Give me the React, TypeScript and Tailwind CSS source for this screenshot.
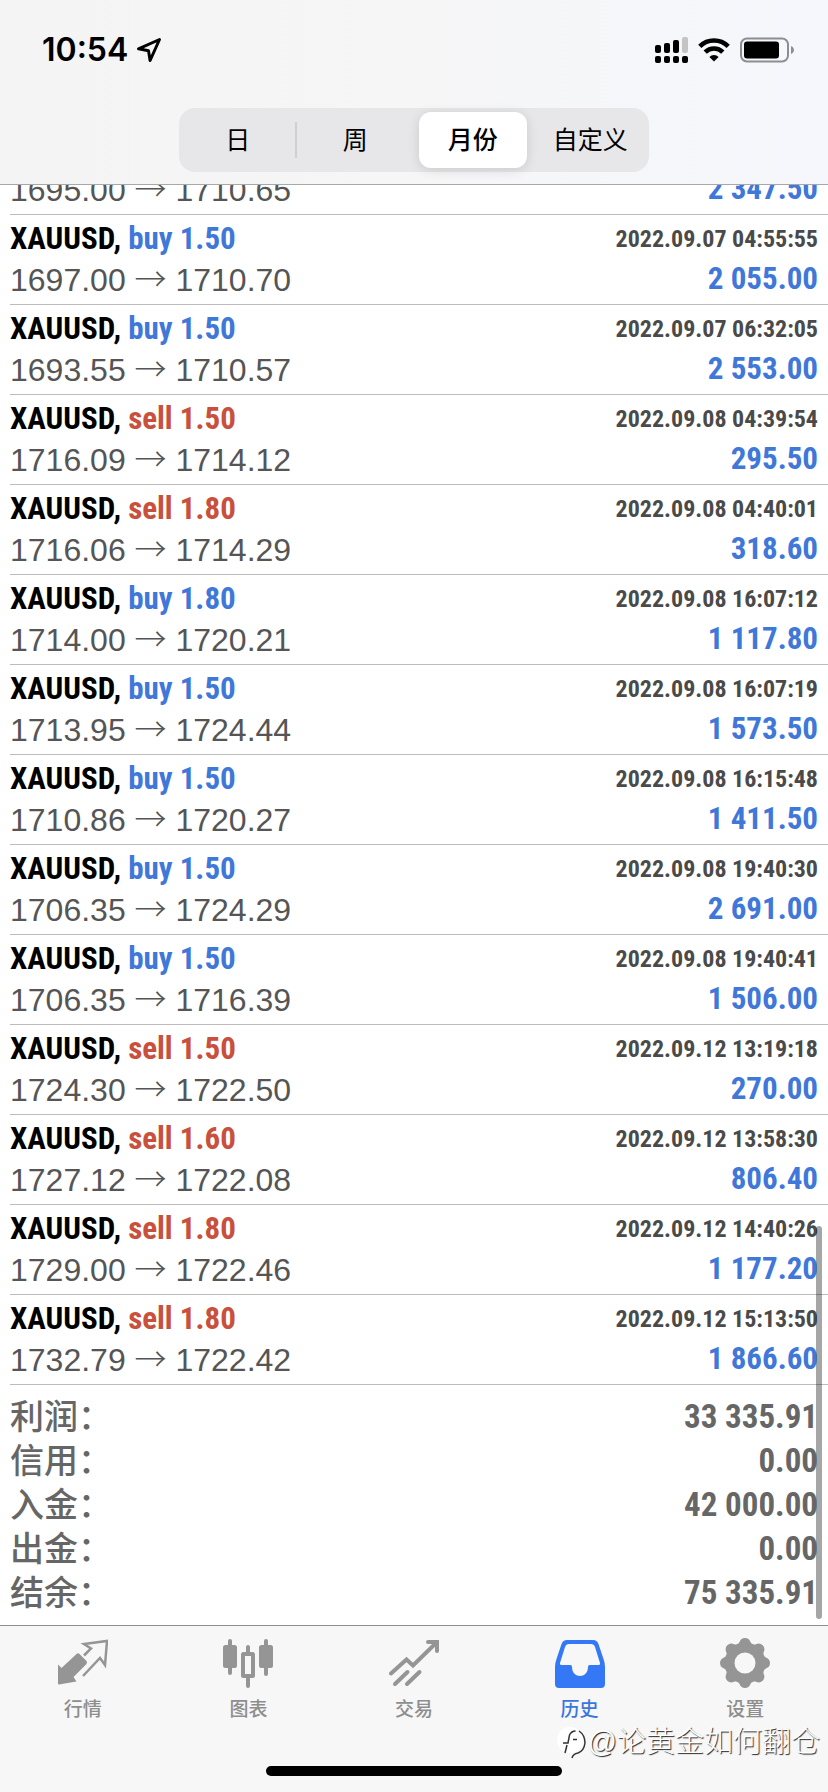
import React from "react";

type Deal = {
  order?: { side: "buy" | "sell"; volume: string; time: string };
  open: string;
  close: string;
  profit: string;
};

const deals: Deal[] = [
  { open: "1695.00", close: "1710.65", profit: "2 347.50" },
  { order: { side: "buy", volume: "1.50", time: "2022.09.07 04:55:55" }, open: "1697.00", close: "1710.70", profit: "2 055.00" },
  { order: { side: "buy", volume: "1.50", time: "2022.09.07 06:32:05" }, open: "1693.55", close: "1710.57", profit: "2 553.00" },
  { order: { side: "sell", volume: "1.50", time: "2022.09.08 04:39:54" }, open: "1716.09", close: "1714.12", profit: "295.50" },
  { order: { side: "sell", volume: "1.80", time: "2022.09.08 04:40:01" }, open: "1716.06", close: "1714.29", profit: "318.60" },
  { order: { side: "buy", volume: "1.80", time: "2022.09.08 16:07:12" }, open: "1714.00", close: "1720.21", profit: "1 117.80" },
  { order: { side: "buy", volume: "1.50", time: "2022.09.08 16:07:19" }, open: "1713.95", close: "1724.44", profit: "1 573.50" },
  { order: { side: "buy", volume: "1.50", time: "2022.09.08 16:15:48" }, open: "1710.86", close: "1720.27", profit: "1 411.50" },
  { order: { side: "buy", volume: "1.50", time: "2022.09.08 19:40:30" }, open: "1706.35", close: "1724.29", profit: "2 691.00" },
  { order: { side: "buy", volume: "1.50", time: "2022.09.08 19:40:41" }, open: "1706.35", close: "1716.39", profit: "1 506.00" },
  { order: { side: "sell", volume: "1.50", time: "2022.09.12 13:19:18" }, open: "1724.30", close: "1722.50", profit: "270.00" },
  { order: { side: "sell", volume: "1.60", time: "2022.09.12 13:58:30" }, open: "1727.12", close: "1722.08", profit: "806.40" },
  { order: { side: "sell", volume: "1.80", time: "2022.09.12 14:40:26" }, open: "1729.00", close: "1722.46", profit: "1 177.20" },
  { order: { side: "sell", volume: "1.80", time: "2022.09.12 15:13:50" }, open: "1732.79", close: "1722.42", profit: "1 866.60" },
];

const summary = [
  { label: "利润", value: "33 335.91" },
  { label: "信用", value: "0.00" },
  { label: "入金", value: "42 000.00" },
  { label: "出金", value: "0.00" },
  { label: "结余", value: "75 335.91" },
];

const periods = ["日", "周", "月份", "自定义"];

function StatusBar() {
  return (
    <div className="flex h-[100px] items-center justify-between pr-[34px] pl-[42px]">
      <div className="flex items-center gap-2">
        <span className="font-['Inter','Noto_Sans_CJK_SC',sans-serif] text-[32px] leading-10 font-semibold text-black">10:54</span>
        <svg className="size-[26px]" viewBox="0 0 26 26" fill="none" stroke="black" strokeWidth="3" strokeLinejoin="round">
          <path d="M23.5 2.5 2.5 11.8l10 1.9 1.6 9.8z" />
        </svg>
      </div>
      <div className="flex items-center gap-2.5">
        <svg className="h-[26px] w-[33px]" viewBox="0 0 33 26">
          <g fill="black">
            <rect x="0" y="8" width="6" height="8" rx="2" />
            <rect x="9" y="6" width="6" height="10" rx="2" />
            <rect x="18" y="3" width="6" height="13" rx="2" />
            <rect x="0" y="19" width="6" height="7" rx="2" />
            <rect x="9" y="19" width="6" height="7" rx="2" />
            <rect x="18" y="19" width="6" height="7" rx="2" />
            <rect x="27" y="19" width="6" height="7" rx="2" />
          </g>
          <rect x="27" y="0" width="6" height="16" rx="2" fill="#c4c4c6" />
        </svg>
        <svg className="h-6 w-8" viewBox="0 0 32 24" fill="none" stroke="black" strokeWidth="4.6">
          <path d="M1.8 8.4a20.2 20.2 0 0 1 28.4 0" />
          <path d="M7.2 14.2a12.4 12.4 0 0 1 17.6 0" />
          <path d="M16 23.6l-4.6-4.6a6.5 6.5 0 0 1 9.2 0z" fill="black" stroke="none" />
        </svg>
        <svg className="h-[26px] w-[54px]" viewBox="0 0 54 26">
          <rect x="1" y="1.5" width="47" height="23" rx="6" fill="none" stroke="#8e8e90" strokeWidth="2" />
          <rect x="4" y="4.5" width="35" height="17" rx="3" fill="black" />
          <path d="M51 9c2 1 3 2.5 3 4s-1 3-3 4z" fill="#8e8e90" />
        </svg>
      </div>
    </div>
  );
}

function PeriodPicker() {
  return (
    <div className="mx-auto mt-2 grid h-16 w-[470px] grid-cols-4 rounded-2xl bg-[#e7e7e9] py-1">
      {periods.map((period, index) => (
        <div key={period} className="relative flex items-center justify-center">
          <button
            type="button"
            aria-pressed={index === 2}
            className={
              index === 2
                ? "h-full w-[108px] rounded-xl bg-white pt-0.5 text-[25px] font-medium text-black shadow-[0_2px_12px_rgba(0,0,0,0.13)]"
                : "h-full w-full pt-0.5 text-[25px] text-black"
            }
          >
            {period}
          </button>
          {index === 0 && <span className="absolute right-0 h-9 w-0.5 bg-[#cfcfd2]" />}
        </div>
      ))}
    </div>
  );
}

function DealRow({ deal }: { deal: Deal }) {
  return (
    <li className="ml-2.5 flex shrink-0 flex-col border-b border-[#bcbcbc] pt-1 pr-2.5 pb-1">
      {deal.order && (
        <div className="flex h-10 items-center justify-between font-['Roboto_Condensed','Noto_Sans_CJK_SC',sans-serif] font-bold">
          <span className="text-[31px] text-black">
            XAUUSD,{" "}
            <span className={deal.order.side === "buy" ? "text-[#3f78d8]" : "text-[#c8503c]"}>
              {deal.order.side} {deal.order.volume}
            </span>
          </span>
          <time className="text-[24px] text-[#4a4a4a]">{deal.order.time}</time>
        </div>
      )}
      <div className="flex h-[41px] items-center justify-between">
        <span className="font-['Liberation_Sans','Noto_Sans_CJK_SC',sans-serif] text-[32px] leading-10 text-[#555]">
          {deal.open} <span className="font-['Noto_Sans_CJK_SC',sans-serif] leading-none font-light">→</span> {deal.close}
        </span>
        <span className="font-['Roboto_Condensed','Noto_Sans_CJK_SC',sans-serif] text-[31px] font-bold text-[#3f78d8]">{deal.profit}</span>
      </div>
    </li>
  );
}

function Summary() {
  return (
    <dl className="px-2.5 py-2.5 text-[#666]">
      {summary.map((item) => (
        <div key={item.label} className="flex h-11 items-center justify-between">
          <dt className="text-[34px] font-medium">{item.label}：</dt>
          <dd className="font-['Roboto_Condensed','Noto_Sans_CJK_SC',sans-serif] text-[33px] font-bold">{item.value}</dd>
        </div>
      ))}
    </dl>
  );
}

function QuotesIcon() {
  return (
    <svg className="size-[50px]" viewBox="0 0 50 50">
      <path d="M18.5 16q1.5-1.5 3 0l7 7q1 1.5 0 3L15.5 39l3 4.5L1 46.5 0 46V26.500l3.500 3.500z" fill="#959595" />
      <path d="M26 17.5l7-7-7-4.500 23-3-2 24-5-7L25 38" fill="none" stroke="#959595" strokeWidth="2.5" />
    </svg>
  );
}

function ChartsIcon() {
  return (
    <svg className="size-[50px]" viewBox="0 0 50 50" fill="#959595">
      <rect x="0" y="7" width="14" height="23" rx="2.5" />
      <rect x="5" y="1" width="4" height="36" rx="2" />
      <rect x="36" y="7" width="14" height="23" rx="2.5" />
      <rect x="41" y="1" width="4" height="37" rx="2" />
      <path fillRule="evenodd" d="M20.5 14h9a2.5 2.5 0 0 1 2.5 2.5v21a2.5 2.5 0 0 1-2.5 2.5h-9a2.5 2.5 0 0 1-2.5-2.5v-21a2.5 2.5 0 0 1 2.5-2.5zM22 18v18h6V18z" />
      <path d="M23 15V9a2 2 0 0 1 4 0v6zM23 39v9a2 2 0 0 0 4 0v-9z" />
    </svg>
  );
}

function TradeIcon() {
  return (
    <svg className="size-[50px]" viewBox="0 0 50 50" fill="none" stroke="#959595" strokeWidth="4" strokeLinecap="round">
      <path d="M2 35.5L17.5 21.5l6.5 6L46 6M39 4h9v9" />
      <path d="M6 46l12.5-12M18 46l12.5-12" />
    </svg>
  );
}

function HistoryIcon() {
  return (
    <svg className="size-[50px]" viewBox="0 0 50 50">
      <path d="M12 2h26q4 0 5.5 4l5 15q1.5 4 1.5 8v17q0 4-4 4H4q-4 0-4-4V29q0-4 1.5-8l5-15Q8 2 12 2z" fill="#3478f6" />
      <path d="M14 6h22q3 0 4 3l5 16q.5 2-2 2h-8.5q-1.5 0-1.5 2c0 12-16 12-16 0q0-2-1.5-2H7q-2.5 0-2-2l5-16q1-3 4-3z" fill="#f7f7f7" />
    </svg>
  );
}

function SettingsIcon() {
  return (
    <svg className="size-[50px]" viewBox="0 0 50 50">
      <g fill="#959595">
        <circle cx="25" cy="25" r="20.5" />
        <path id="tooth" d="M16.5 9l3-5Q21 0 25 0t5.5 4l3 5zM16.5 41l3 5Q21 50 25 50t5.5-4l3-5z" />
        <use href="#tooth" transform="rotate(45 25 25)" />
        <use href="#tooth" transform="rotate(90 25 25)" />
        <use href="#tooth" transform="rotate(135 25 25)" />
      </g>
      <circle cx="25" cy="25" r="10.5" fill="#f7f7f7" />
    </svg>
  );
}

const tabs = [
  { label: "行情", Icon: QuotesIcon },
  { label: "图表", Icon: ChartsIcon },
  { label: "交易", Icon: TradeIcon },
  { label: "历史", Icon: HistoryIcon },
  { label: "设置", Icon: SettingsIcon },
];

function Watermark() {
  return (
    <div className="absolute right-2 bottom-8 flex items-center">
      <svg className="h-[34px] w-8" viewBox="0 0 32 34" fill="none">
        <circle cx="14" cy="15" r="13" fill="white" />
        <path d="M7 18h5l1.5-8q2-4 6-4M17 14.5h4M11 20l-2 8M23 6q6 4 6 12-1 8-7 10-5 1-6 5" stroke="#333" strokeWidth="1.5" />
      </svg>
      <span className="text-[29px] leading-9 font-light text-white [text-shadow:1px_1px_1px_#222]">@论黄金如何翻仓</span>
    </div>
  );
}

export default function App() {
  return (
    <div className="flex h-screen flex-col overflow-hidden bg-white font-['Liberation_Sans','Noto_Sans_CJK_SC',sans-serif]">
      <header className="h-[185px] shrink-0 border-b border-[#a8a8a8] bg-linear-to-r from-[#f4f4f5] via-[#f6f6f7] to-[#f5f7fc]">
        <StatusBar />
        <PeriodPicker />
      </header>

      <main className="relative flex min-h-0 flex-1 flex-col justify-end overflow-hidden">
        <ul className="flex flex-col">
          {deals.map((deal) => (
            <DealRow key={deal.profit} deal={deal} />
          ))}
        </ul>
        <Summary />
        <div className="absolute right-1.5 bottom-1.5 h-[393px] w-1.5 rounded-full bg-black/35" />
      </main>

      <footer className="relative h-[167px] shrink-0 border-t border-[#8f8f8f] bg-[#f7f7f7]">
        <nav className="flex pt-3">
          {tabs.map(({ label, Icon }) => (
            <a
              key={label}
              href="#"
              aria-current={label === "历史" ? "page" : undefined}
              className={
                label === "历史"
                  ? "flex flex-1 flex-col items-center gap-2 text-[#3c76dc]"
                  : "flex flex-1 flex-col items-center gap-2 text-[#8e8e8e]"
              }
            >
              <Icon />
              <span className="text-[19px] leading-7 font-medium">{label}</span>
            </a>
          ))}
        </nav>
        <div className="absolute bottom-4 left-1/2 h-2.5 w-[296px] -translate-x-1/2 rounded-full bg-black" />
        <Watermark />
      </footer>
    </div>
  );
}
